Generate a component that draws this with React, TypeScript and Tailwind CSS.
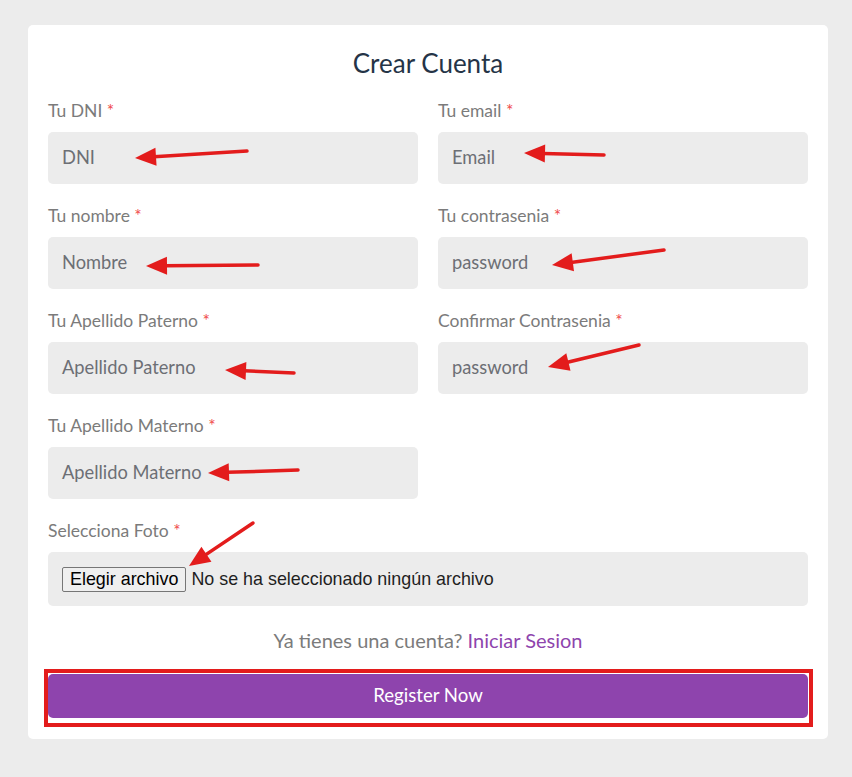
import React from 'react';

const arrows: [number, number, number, number][] = [
    [247, 151, 135, 158],
    [604, 155, 524, 153],
    [258, 265, 146, 266],
    [664, 250, 552, 265],
    [294, 373, 225, 370],
    [639, 345, 548, 367],
    [298, 470, 208, 473],
    [253, 523, 189, 566],
];

// annotation arrow: line from tail to the base of a filled head at the tip
const Arrow: React.FC<{ a: [number, number, number, number] }> = ({ a }) => {
    const [x1, y1, x2, y2] = a;
    const dx = x2 - x1;
    const dy = y2 - y1;
    const len = Math.hypot(dx, dy);
    const ux = dx / len;
    const uy = dy / len;
    const headLen = 21;
    const half = 9;
    const bx = x2 - ux * headLen;
    const by = y2 - uy * headLen;
    const pts = `${x2},${y2} ${bx - uy * half},${by + ux * half} ${bx + uy * half},${by - ux * half}`;
    return (
        <g>
            <line x1={x1} y1={y1} x2={bx + ux * 2} y2={by + uy * 2} stroke="#e31c1c" strokeWidth={3.5} strokeLinecap="round" />
            <polygon points={pts} fill="#e31c1c" />
        </g>
    );
};

const Field: React.FC<{ label: string; placeholder: string }> = ({ label, placeholder }) => (
    <div className="flex flex-col">
        <label className="text-[17.5px] leading-[24px] text-[#7b7b7b]">
            {label} <span className="text-[#f04b4b]">*</span>
        </label>
        <div className="mt-[9px] h-[52px] rounded-[5px] bg-[#ececec] pl-[14px] flex items-center text-[18.3px] text-[#6c6f75]">
            {placeholder}
        </div>
    </div>
);

const App: React.FC = () => {
    return (
        <div className="relative min-h-[777px] bg-[#ececec] pt-[25px] font-['Lato',sans-serif]">
            <div className="ml-[28px] w-[800px] rounded-[5px] bg-white px-5 pt-[20px] pb-[21px]">
                <h2 className="text-center text-[26px] leading-[36px] text-[#253447]">Crear Cuenta</h2>

                <div className="mt-[18px] grid grid-cols-2 gap-x-5 gap-y-[20px]">
                    <Field label="Tu DNI" placeholder="DNI" />
                    <Field label="Tu email" placeholder="Email" />
                    <Field label="Tu nombre" placeholder="Nombre" />
                    <Field label="Tu contrasenia" placeholder="password" />
                    <Field label="Tu Apellido Paterno" placeholder="Apellido Paterno" />
                    <Field label="Confirmar Contrasenia" placeholder="password" />
                    <Field label="Tu Apellido Materno" placeholder="Apellido Materno" />
                    <div />
                </div>

                {/* Foto */}
                <div className="mt-[20px] flex flex-col">
                    <label className="text-[17.5px] leading-[24px] text-[#7b7b7b]">
                        Selecciona Foto <span className="text-[#f04b4b]">*</span>
                    </label>
                    <div className="mt-[9px] h-[54px] rounded-[5px] bg-[#ececec] pl-[14px] flex items-center font-['Liberation_Sans',Arial,sans-serif] text-[17.9px] text-[#1f1f1f]">
                        <span className="h-[25px] flex items-center rounded-[2px] border border-[#767676] bg-[#efefef] px-[7px] text-black">
                            Elegir archivo
                        </span>
                        <span className="ml-[5px]">No se ha seleccionado ningún archivo</span>
                    </div>
                </div>

                <p className="mt-[22px] text-center text-[20px] leading-[24px] text-[#7b7b7b]">
                    Ya tienes una cuenta? <a className="text-[#8e44ad]">Iniciar Sesion</a>
                </p>

                <div className="relative mt-[22px]">
                    <button className="h-[44px] w-full rounded-[5px] bg-[#8e44ad] text-[18.6px] text-white">
                        Register Now
                    </button>
                    <div className="pointer-events-none absolute -left-[4px] -right-[5px] -top-[5px] -bottom-[9px] border-[4px] border-[#e31c1c]" />
                </div>
            </div>

            <svg className="pointer-events-none absolute left-0 top-0" width={852} height={777}>
                {arrows.map((a, i) => (
                    <Arrow key={i} a={a} />
                ))}
            </svg>
        </div>
    );
};

export default App;
